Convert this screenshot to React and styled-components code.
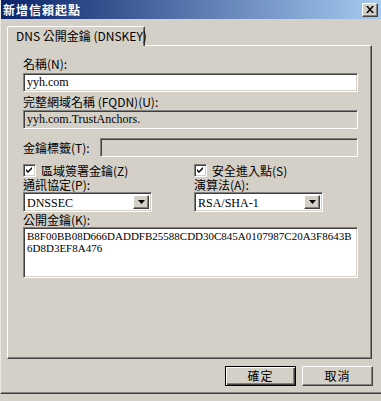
import React from 'react';
import styled, { createGlobalStyle } from 'styled-components';

const face = '#d4d0c8';
const shadow = '#808080';
const darkShadow = '#404040';
const cjk = '"Noto Sans CJK TC", "Noto Sans", sans-serif';
const serif = '"Liberation Serif", "Noto Sans CJK TC", serif';

const GlobalStyle = createGlobalStyle`
  html, body {
    margin: 0;
    padding: 0;
    background: ${face};
  }
  body {
    font-family: ${cjk};
    font-size: 12px;
    line-height: 14px;
    color: #000;
  }
`;

const Window = styled.div`
  width: 381px;
  height: 394px;
  box-sizing: border-box;
  background: ${face};
  display: flex;
  flex-direction: column;
  border-left: 1px solid #ece9e2;
  border-bottom: 1px solid ${darkShadow};
  box-shadow: inset 0 -1px ${shadow};
  overflow: hidden;
`;

const TitleBar = styled.div`
  height: 19px;
  flex: none;
  display: flex;
  align-items: center;
  justify-content: space-between;
  padding: 0 3px 0 2px;
  background: linear-gradient(to right, #0a246a, #a6caf0);
`;

const Title = styled.div`
  color: #fff;
  font-weight: bold;
  font-size: 12px;
  letter-spacing: 1px;
  line-height: 19px;
`;

const Raised = styled.div`
  box-sizing: border-box;
  background: ${face};
  border: 1px solid;
  border-color: #fff ${darkShadow} ${darkShadow} #fff;
  box-shadow: inset -1px -1px ${shadow};
`;

const CloseButton = styled(Raised)`
  width: 16px;
  height: 14px;
  display: flex;
  align-items: center;
  justify-content: center;
`;

const Body = styled.div`
  flex: 1;
  display: flex;
  flex-direction: column;
  padding: 7px 8px 0 6px;
`;

const TabStrip = styled.div`
  display: flex;
  height: 19px;
`;

const Tab = styled.div`
  box-sizing: border-box;
  height: 20px;
  margin-bottom: -1px;
  padding: 0 7px 0 8px;
  border: 1px solid;
  border-bottom: none;
  border-color: #fff ${darkShadow} transparent #fff;
  box-shadow: inset -1px 0 ${shadow};
  border-radius: 2px 2px 0 0;
  background: ${face};
  position: relative;
  z-index: 1;
  font-size: 12px;
  line-height: 18px;
  white-space: nowrap;
  width: 138px;
`;

const Panel = styled.div`
  box-sizing: border-box;
  height: 314px;
  margin-right: 1px;
  border: 1px solid;
  border-color: #fff ${darkShadow} ${darkShadow} #fff;
  box-shadow: inset -1px -1px ${shadow};
  padding: 11px 13px 0 15px;
  display: flex;
  flex-direction: column;
`;

const Label = styled.div`
  font-size: 12px;
  line-height: 14px;
  height: 14px;
  flex: none;
  white-space: nowrap;
  margin-top: ${({ $top }) => $top || 0}px;
  width: ${({ $width }) => ($width ? `${$width}px` : 'auto')};
`;

const Sunken = styled.div`
  box-sizing: border-box;
  border: 1px solid;
  border-color: ${shadow} #fff #fff ${shadow};
  box-shadow: inset 1px 1px ${darkShadow}, inset -1px -1px ${face};
  background: ${({ $disabled }) => ($disabled ? face : '#fff')};
`;

const TextBox = styled(Sunken)`
  height: 19px;
  margin-top: ${({ $top }) => $top || 0}px;
  padding: 0 3px;
  font-family: ${serif};
  font-size: 12px;
  line-height: 17px;
  flex: ${({ $grow }) => ($grow ? 1 : 'none')};
`;

const Row = styled.div`
  display: flex;
  align-items: center;
  margin-top: ${({ $top }) => $top || 0}px;
`;

const Columns = styled.div`
  display: grid;
  grid-template-columns: 171px 1fr;
  margin-top: ${({ $top }) => $top || 0}px;
`;

const Column = styled.div`
  display: flex;
  flex-direction: column;
`;

const CheckRow = styled.div`
  display: flex;
  align-items: center;
  gap: 5px;
  height: 13px;
  line-height: 13px;
  white-space: nowrap;
`;

const CheckBox = styled(Sunken)`
  width: 13px;
  height: 13px;
  flex: none;
  display: flex;
  align-items: center;
  justify-content: center;
`;

const Select = styled(Sunken)`
  width: 129px;
  height: 20px;
  display: flex;
  align-items: stretch;
  padding: 2px;
`;

const SelectValue = styled.div`
  flex: 1;
  font-family: ${serif};
  font-size: 12px;
  line-height: 16px;
  padding-left: 1px;
`;

const DropButton = styled(Raised)`
  width: 16px;
  display: flex;
  align-items: center;
  justify-content: center;
`;

const KeyArea = styled(Sunken)`
  height: 51px;
  padding: 2px 3px;
  font-family: ${serif};
  font-size: 11px;
  line-height: 12px;
  word-break: break-all;
`;

const Footer = styled.div`
  display: flex;
  justify-content: flex-end;
  gap: 6px;
  margin-top: 7px;
`;

const Button = styled.div`
  box-sizing: border-box;
  width: 71px;
  height: 20px;
  display: flex;
  align-items: center;
  justify-content: center;
  background: ${face};
  border: 1px solid;
  border-color: #fff ${darkShadow} ${darkShadow} #fff;
  box-shadow: inset -1px -1px ${shadow};
  font-size: 12px;
  letter-spacing: 1px;
  ${({ $default }) =>
    $default &&
    `
    border: 1px solid #000;
    box-shadow: inset 1px 1px #fff, inset -1px -1px ${darkShadow}, inset -2px -2px ${shadow};
  `}
`;

const Check = () => (
  <svg width="7" height="7" viewBox="0 0 7 7">
    <path d="M0 2 L2 4 L6 0 L6 2 L2 6 L0 4 Z" fill="#000" />
  </svg>
);

const Arrow = () => (
  <svg width="7" height="4" viewBox="0 0 7 4">
    <path d="M0 0 H7 L3.5 4 Z" fill="#000" />
  </svg>
);

const CloseGlyph = () => (
  <svg width="8" height="7" viewBox="0 0 8 7">
    <path d="M0 0 H2 L4 2.5 L6 0 H8 L5 3.5 L8 7 H6 L4 4.5 L2 7 H0 L3 3.5 Z" fill="#000" />
  </svg>
);

export default function App() {
  return (
    <>
      <GlobalStyle />
      <Window>
        <TitleBar>
          <Title>新增信賴起點</Title>
          <CloseButton>
            <CloseGlyph />
          </CloseButton>
        </TitleBar>
        <Body>
          <TabStrip>
            <Tab>DNS 公開金鑰 (DNSKEY)</Tab>
          </TabStrip>
          <Panel>
            <Label>名稱(N):</Label>
            <TextBox $top={2}>yyh.com</TextBox>
            <Label $top={3}>完整網域名稱 (FQDN)(U):</Label>
            <TextBox $top={1} $disabled>yyh.com.TrustAnchors.</TextBox>
            <Row $top={9}>
              <Label $width={77}>金鑰標籤(T):</Label>
              <TextBox $grow $disabled />
            </Row>
            <Columns $top={7}>
              <Column>
                <CheckRow>
                  <CheckBox>
                    <Check />
                  </CheckBox>
                  <span>區域簽署金鑰(Z)</span>
                </CheckRow>
                <Label $top={1}>通訊協定(P):</Label>
                <Select>
                  <SelectValue>DNSSEC</SelectValue>
                  <DropButton>
                    <Arrow />
                  </DropButton>
                </Select>
              </Column>
              <Column>
                <CheckRow>
                  <CheckBox>
                    <Check />
                  </CheckBox>
                  <span>安全進入點(S)</span>
                </CheckRow>
                <Label $top={1}>演算法(A):</Label>
                <Select>
                  <SelectValue>RSA/SHA-1</SelectValue>
                  <DropButton>
                    <Arrow />
                  </DropButton>
                </Select>
              </Column>
            </Columns>
            <Label $top={1}>公開金鑰(K):</Label>
            <KeyArea>
              B8F00BB08D666DADDFB25588CDD30C845A0107987C20A3F8643B6D8D3EF8A476
            </KeyArea>
          </Panel>
          <Footer>
            <Button $default>確定</Button>
            <Button>取消</Button>
          </Footer>
        </Body>
      </Window>
    </>
  );
}
